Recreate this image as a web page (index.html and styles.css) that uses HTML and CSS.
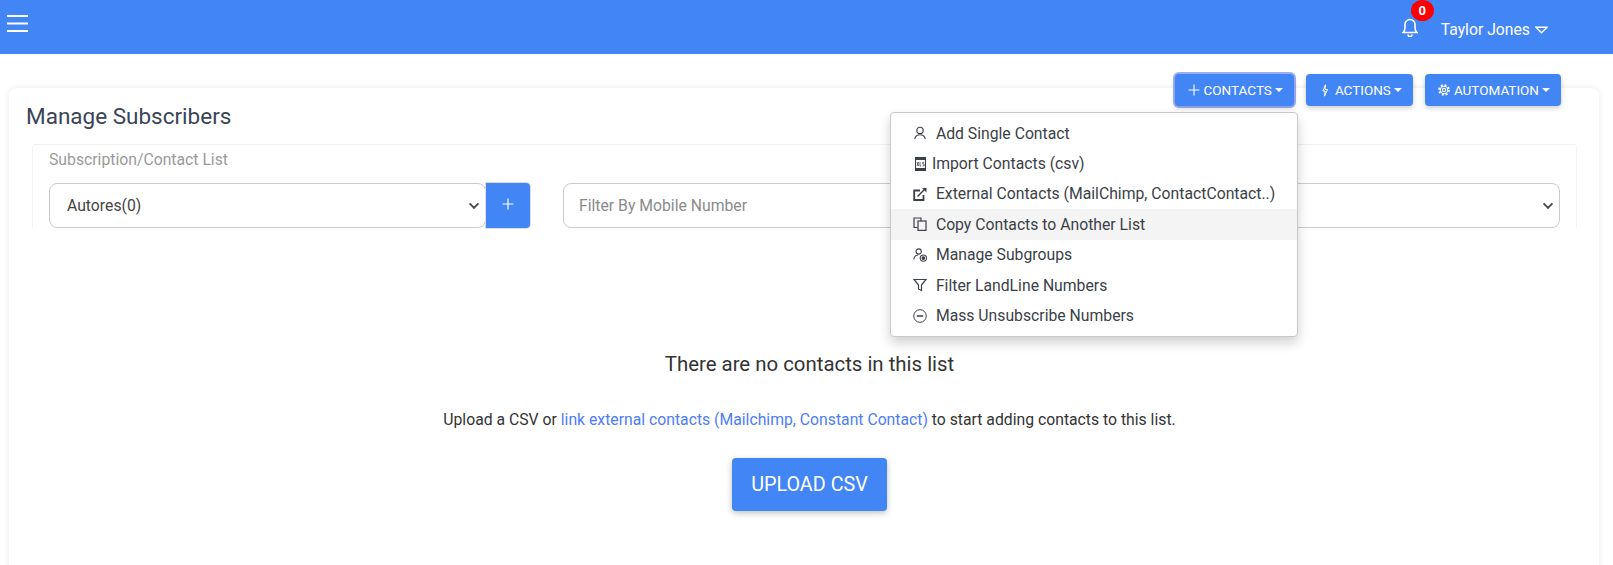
FILE: index.html
```html
<!DOCTYPE html>
<html lang="en">

<head>
    <meta charset="UTF-8">
    <title>Manage Subscribers</title>
    <link rel="stylesheet" href="styles.css">
</head>

<body>
    <header class="topbar">
        <button class="menu-toggle" aria-label="Menu">
            <svg width="22" height="18" viewBox="0 0 22 18" fill="none" stroke="currentColor" stroke-width="2">
                <line x1="0" y1="2" x2="21" y2="2" />
                <line x1="0" y1="9.500" x2="21" y2="9.500" />
                <line x1="0" y1="17" x2="21" y2="17" />
            </svg>
        </button>
        <div class="topbar-right">
            <div class="bell">
                <svg width="16" height="20" viewBox="0 0 16 20" fill="none" stroke="currentColor" stroke-width="1.600">
                    <path d="M1 15.500h14c-1.500-1.300-2-2.500-2-5V7.500a5 5 0 0 0-10 0v3c0 2.500-.5 3.700-2 5z" />
                    <path d="M6 17.500a2 2 0 0 0 4 0" />
                </svg>
                <span class="bell-count">0</span>
            </div>
            <div class="user-menu">
                Taylor Jones
                <svg width="13" height="8" viewBox="0 0 14 8" fill="none" stroke="currentColor" stroke-width="1.500">
                    <path d="M1 1h12L7 7z" />
                </svg>
            </div>
        </div>
    </header>

    <main class="content">
        <div class="toolbar">
            <div class="toolbar-item">
                <button class="btn btn-focus">
                    <svg width="12" height="12" viewBox="0 0 12 12" fill="none" stroke="currentColor" stroke-width="1.100">
                        <path d="M6 .5v11M.5 6h11" />
                    </svg>
                    CONTACTS<span class="caret"></span>
                </button>
                <ul class="dropdown">
                    <li>
                        <svg width="14" height="14" viewBox="0 0 16 16" fill="none" stroke="currentColor" stroke-width="1.300">
                            <circle cx="8" cy="5" r="3.600" />
                            <path d="M2 15c.5-3.500 2.500-5 6-5s5.500 1.500 6 5" />
                        </svg>
                        Add Single Contact
                    </li>
                    <li class="tight">
                        <svg width="11" height="14" viewBox="0 0 11 14">
                            <path d="M0 0h11v3H0zM0 11h11v3H0z" fill="currentColor" />
                            <path d="M.5 0v14M10.500 0v14" stroke="currentColor" stroke-width="1" />
                            <path d="M2 5l1.600 4M3.600 5L2 9M5 5v4h1.100M9.200 5.300H7.800v1.700h1.300v1.800H7.600" fill="none" stroke="currentColor" stroke-width=".8" />
                        </svg>
                        Import Contacts (csv)
                    </li>
                    <li>
                        <svg width="14" height="14" viewBox="0 0 14 14" fill="none" stroke="currentColor" stroke-width="1.800">
                            <path d="M10.500 8v5H1.200V3.500H7" />
                            <path d="M4.500 9.500l8-8" stroke-width="1.500" />
                            <path d="M9 1h4.500v4.500z" fill="currentColor" stroke="none" />
                        </svg>
                        External Contacts (MailChimp, ContactContact..)
                    </li>
                    <li class="active">
                        <svg width="14" height="14" viewBox="0 0 14 14" fill="none" stroke="currentColor" stroke-width="1.200">
                            <path d="M4.500 10.500H1V1h7v3" />
                            <rect x="5" y="4" width="8" height="9.400" />
                        </svg>
                        Copy Contacts to Another List
                    </li>
                    <li>
                        <svg width="14" height="14" viewBox="0 0 16 16" fill="none" stroke="currentColor" stroke-width="1.200">
                            <circle cx="6.500" cy="4" r="3" />
                            <path d="M.8 13c.5-3 2.200-5 5.200-5" />
                            <circle cx="11.800" cy="11.500" r="3.600" />
                            <circle cx="11.800" cy="11.500" r="1.500" fill="currentColor" />
                        </svg>
                        Manage Subgroups
                    </li>
                    <li>
                        <svg width="14" height="14" viewBox="0 0 14 14" fill="none" stroke="currentColor" stroke-width="1.200">
                            <path d="M1 1.500h12L8.500 7v5.500l-3-1.500V7z" />
                        </svg>
                        Filter LandLine Numbers
                    </li>
                    <li>
                        <svg width="14" height="14" viewBox="0 0 14 14" fill="none" stroke="currentColor" stroke-width="1">
                            <circle cx="7" cy="7" r="6.300" />
                            <path d="M3.800 7h6.400" stroke-width="1.500" />
                        </svg>
                        Mass Unsubscribe Numbers
                    </li>
                </ul>
            </div>
            <button class="btn">
                <svg width="12" height="13" viewBox="0 0 12 13" fill="none" stroke="currentColor" stroke-width="1">
                    <path d="M6.500 .8L3.800 7h2.400l-.8 5.200L8.500 5.500H6z" />
                </svg>
                ACTIONS<span class="caret"></span>
            </button>
            <button class="btn">
                <svg width="12" height="12" viewBox="0 0 16 16" fill="none" stroke="currentColor">
                    <circle cx="8" cy="8" r="2.200" stroke-width="1.400" />
                    <circle cx="8" cy="8" r="5" stroke-width="1.400" />
                    <circle cx="8" cy="8" r="6.600" stroke-width="2.400" stroke-dasharray="2.600 2.580" />
                </svg>
                AUTOMATION<span class="caret"></span>
            </button>
        </div>

        <section class="card">
            <h2 class="card-title">Manage Subscribers</h2>
            <div class="panel">
                <div class="filters">
                    <div class="filter-col">
                        <label class="filter-label">Subscription/Contact List</label>
                        <div class="input-group">
                            <div class="select-box">Autores(0)<span class="chevron"></span></div>
                            <button class="add-btn">
                                <svg width="12" height="12" viewBox="0 0 12 12" fill="none" stroke="currentColor" stroke-width="1.200">
                                    <path d="M6 .5v11M.5 6h11" />
                                </svg>
                            </button>
                        </div>
                    </div>
                    <div class="filter-col">
                        <div class="input-box">Filter By Mobile Number</div>
                    </div>
                    <div class="filter-col">
                        <div class="select-box"><span class="chevron"></span></div>
                    </div>
                </div>
            </div>

            <div class="empty">
                <h3>There are no contacts in this list</h3>
                <p>Upload a CSV or <a href="#">link external contacts (Mailchimp, Constant Contact)</a> to start adding contacts to this list.</p>
                <button class="upload-btn">UPLOAD CSV</button>
            </div>
        </section>
    </main>
</body>

</html>
```

FILE: styles.css
```css
* {
    margin: 0;
    padding: 0;
    box-sizing: border-box;
    font-family: Roboto, "Liberation Sans", sans-serif;
}

body {
    background: #ffffff;
    color: #333333;
    height: 565px;
    overflow: hidden;
}

button {
    border: none;
    cursor: pointer;
}

.topbar {
    height: 54px;
    background: #4285f4;
    color: #ffffff;
    display: flex;
    justify-content: space-between;
    padding: 0 65px 0 7px;
}

.menu-toggle {
    background: none;
    color: #ffffff;
    height: 18px;
    margin-top: 14px;
}

.topbar-right {
    display: flex;
    align-items: flex-start;
    gap: 23px;
}

.bell {
    position: relative;
    margin-top: 17px;
}

.bell-count {
    position: absolute;
    top: -17px;
    left: 9px;
    width: 23px;
    height: 21px;
    border-radius: 50%;
    background: #ff0000;
    font-size: 13px;
    font-weight: 700;
    line-height: 21px;
    text-align: center;
}

.user-menu {
    display: flex;
    align-items: center;
    gap: 5px;
    font-size: 15.750px;
    margin-top: 20px;
    line-height: 19px;
}

.content {
    padding: 20px 14px 0 9px;
}

.toolbar {
    display: flex;
    justify-content: flex-end;
    align-items: center;
    gap: 12px;
    padding-right: 38px;
    margin-bottom: -18px;
    position: relative;
    z-index: 2;
}

.toolbar-item {
    position: relative;
}

.btn {
    display: flex;
    align-items: center;
    gap: 4px;
    height: 32px;
    padding: 0 11px 0 13px;
    background: #4285f4;
    color: #ffffff;
    border-radius: 4px;
    font-size: 13.500px;
    font-weight: 400;
    box-shadow: 0 2px 5px rgba(0, 0, 0, 0.2);
}

.btn-focus {
    box-shadow: 0 0 0 2px rgba(66, 95, 230, 0.5), 0 2px 5px rgba(0, 0, 0, 0.2);
}

.caret {
    width: 0;
    height: 0;
    margin-left: -1px;
    border-left: 4px solid transparent;
    border-right: 4px solid transparent;
    border-top: 4px solid #ffffff;
}

.dropdown {
    position: absolute;
    top: 38px;
    right: -4px;
    width: 408px;
    padding: 5px 0;
    list-style: none;
    background: #ffffff;
    border: 1px solid #c8c8c8;
    border-radius: 4px;
    box-shadow: 0 6px 12px rgba(0, 0, 0, 0.18);
}

.dropdown li {
    display: flex;
    align-items: center;
    gap: 9px;
    height: 30.400px;
    padding-left: 22px;
    font-size: 15.750px;
    color: #3b3f46;
}

.dropdown li.tight {
    gap: 6px;
    padding-left: 24px;
}

.dropdown li.active {
    background: #f4f4f4;
}

.dropdown svg {
    flex-shrink: 0;
}

.card {
    height: 500px;
    border-radius: 8px;
    padding: 14px 22px 0 23px;
    box-shadow: 0 0 6px rgba(0, 0, 0, 0.09);
}

.card-title {
    font-size: 22.500px;
    font-weight: 400;
    line-height: 29px;
    color: #3a4456;
    margin-left: -6px;
    height: 42px;
}

.panel {
    border-top: 1px solid #f0f0f0;
    border-left: 1px solid #f4f4f4;
    border-right: 1px solid #f4f4f4;
    border-radius: 4px 4px 0 0;
    padding: 0 16px;
    height: 84px;
}

.filters {
    display: grid;
    grid-template-columns: 481px 1fr 1fr;
    gap: 33px;
}

.filter-col {
    display: flex;
    flex-direction: column;
    justify-content: flex-end;
}

.filter-label {
    font-size: 15.750px;
    line-height: 20px;
    color: #9a9a9a;
    margin-bottom: 13px;
    margin-top: 5px;
}

.input-group {
    display: flex;
}

.select-box,
.input-box {
    height: 45px;
    display: flex;
    align-items: center;
    justify-content: space-between;
    padding: 0 7px 0 17px;
    border: 1px solid #cccccc;
    border-radius: 8px;
    font-size: 15.750px;
    color: #444444;
    background: #ffffff;
}

.input-group .select-box {
    width: 437px;
}

.input-box {
    padding-left: 15px;
    color: #8a8a8a;
}

.chevron {
    width: 8px;
    height: 8px;
    margin: -4px 0 0 auto;
    border-right: 2px solid #444444;
    border-bottom: 2px solid #444444;
    transform: rotate(45deg) scale(0.9);
}

.add-btn {
    width: 44px;
    height: 45px;
    background: #4285f4;
    color: #ffffff;
    border-radius: 0 4px 4px 0;
    box-shadow: 0 0 0 1px #dddddd;
}

.empty {
    text-align: center;
    margin-right: -10px;
    padding-top: 124px;
}

.empty h3 {
    font-size: 20.400px;
    font-weight: 400;
    line-height: 25px;
    color: #333333;
}

.empty p {
    font-size: 15.750px;
    line-height: 20px;
    margin-top: 33px;
}

.empty a {
    color: #4d7df5;
    text-decoration: none;
}

.upload-btn {
    display: block;
    margin: 28px auto 0;
    width: 155px;
    height: 53px;
    background: #4285f4;
    color: #ffffff;
    border-radius: 4px;
    font-size: 19.800px;
    font-weight: 400;
    box-shadow: 0 2px 6px rgba(0, 0, 0, 0.25);
}
```
